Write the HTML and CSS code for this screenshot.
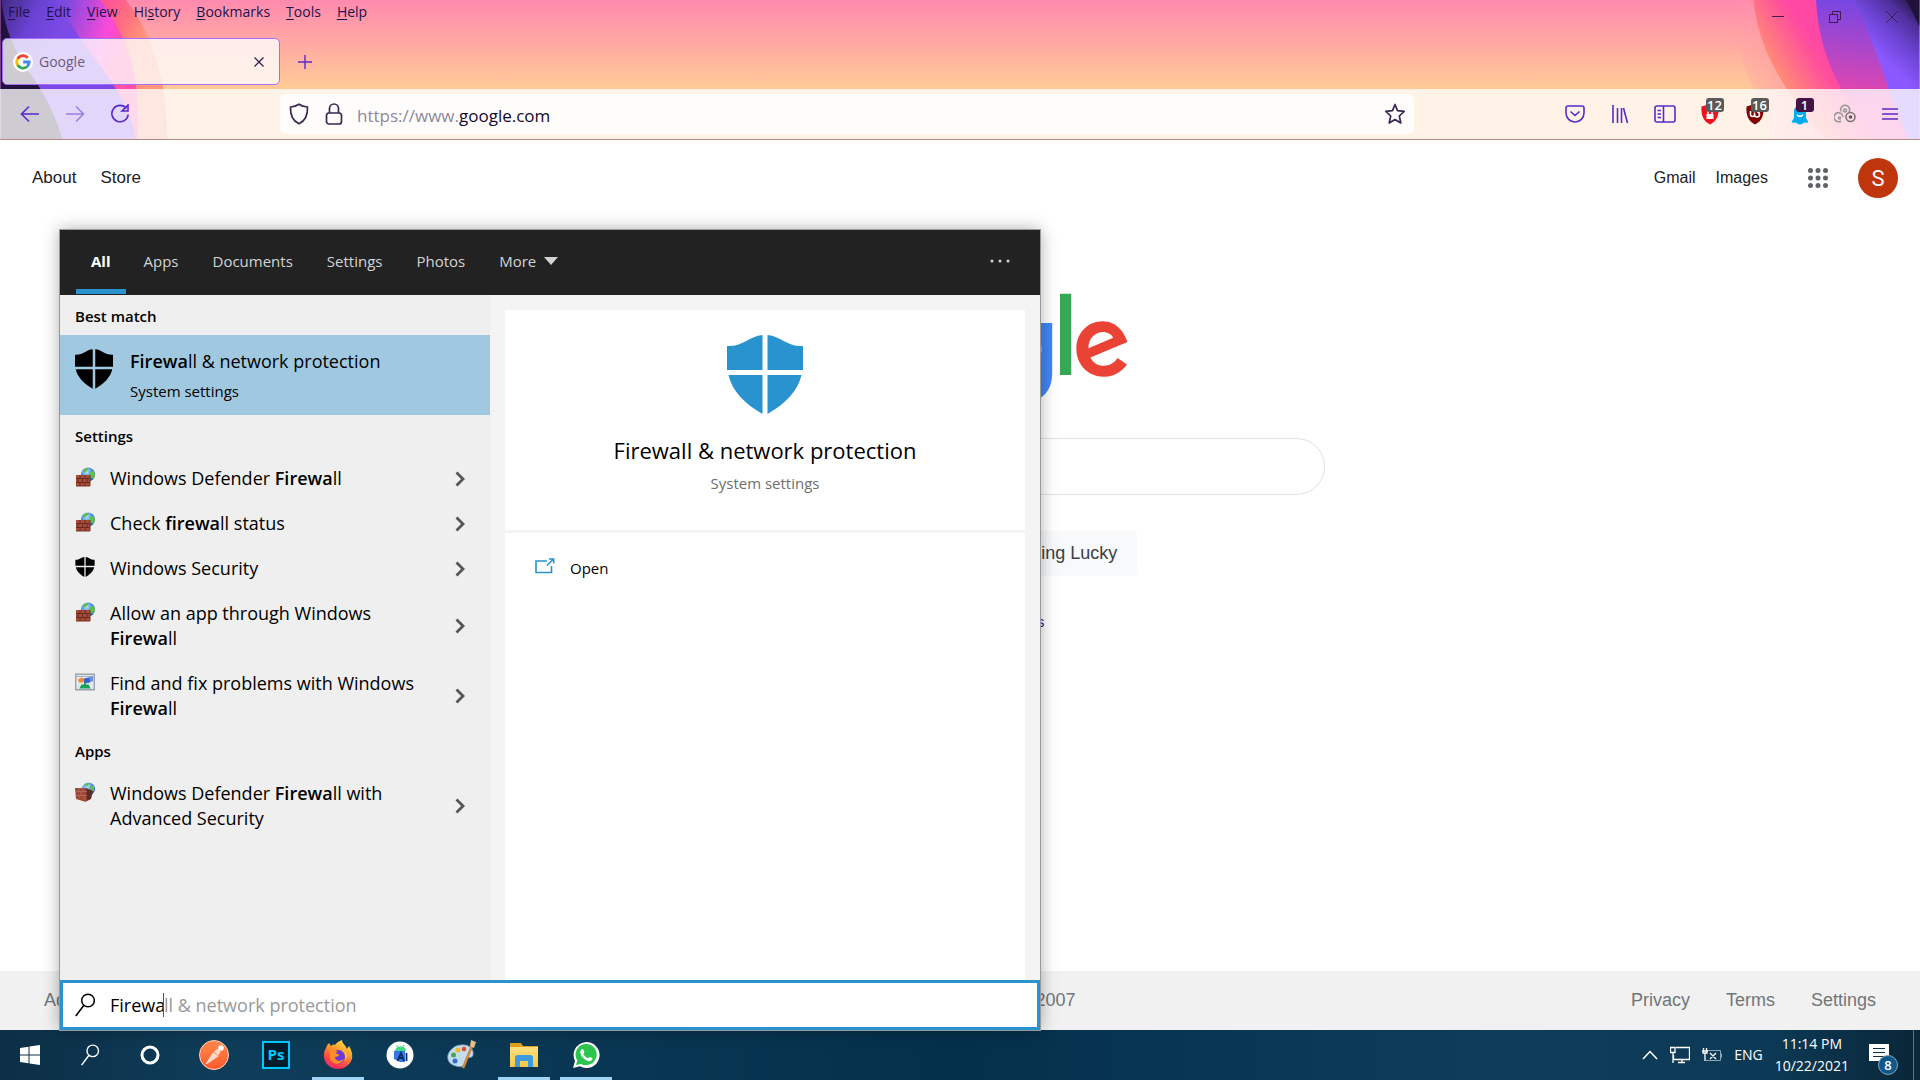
FILE: index.html
```html
<!DOCTYPE html>
<html lang="en">
<head>
<meta charset="utf-8">
<meta name="viewport" content="width=device-width, initial-scale=1">
<title>Desktop</title>
<link rel="stylesheet" href="styles.css">
</head>
<body>
<svg class="defs" aria-hidden="true">
  <defs>
    <linearGradient id="l-violet" gradientUnits="userSpaceOnUse" x1="0" y1="0" x2="60" y2="30"><stop offset="0" stop-color="#3f2a80"/><stop offset=".55" stop-color="#6a42d4"/><stop offset="1" stop-color="#7c4ae6"/></linearGradient>
    <linearGradient id="l-magenta" gradientUnits="userSpaceOnUse" x1="65" y1="0" x2="130" y2="20"><stop offset="0" stop-color="#7a48e0"/><stop offset=".75" stop-color="#ff4ad8"/><stop offset="1" stop-color="#ff4fa8"/></linearGradient>
    <linearGradient id="l-coral" gradientUnits="userSpaceOnUse" x1="105" y1="0" x2="150" y2="24"><stop offset="0" stop-color="#ff4f98"/><stop offset=".55" stop-color="#ff7080"/><stop offset="1" stop-color="#ff9478"/></linearGradient>
    <linearGradient id="r-coral" gradientUnits="userSpaceOnUse" x1="1765" y1="50" x2="1805" y2="25"><stop offset="0" stop-color="#ff8878"/><stop offset=".8" stop-color="#ff4f9c"/><stop offset="1" stop-color="#ff48a4"/></linearGradient>
    <linearGradient id="r-violet" gradientUnits="userSpaceOnUse" x1="1860" y1="0" x2="1845" y2="105"><stop offset="0" stop-color="#7446e6"/><stop offset="1" stop-color="#f046a8"/></linearGradient>
    <linearGradient id="r-blue" gradientUnits="userSpaceOnUse" x1="1876" y1="52" x2="1918" y2="8"><stop offset="0" stop-color="#8b58ff"/><stop offset=".4" stop-color="#6c44d4"/><stop offset=".75" stop-color="#4f309c"/><stop offset="1" stop-color="#2c1850"/></linearGradient>
    <linearGradient id="r-glow" x1="0" y1="0" x2="1" y2="0"><stop offset="0" stop-color="#ff9aa8" stop-opacity="0"/><stop offset="1" stop-color="#ff90a8"/></linearGradient>
    <radialGradient id="globe" cx=".4" cy=".3" r=".8"><stop offset="0" stop-color="#bfe4ff"/><stop offset=".5" stop-color="#3f8fe0"/><stop offset="1" stop-color="#1a4aa0"/></radialGradient>
    <linearGradient id="postman" x1="0" y1="0" x2="0" y2="1"><stop offset="0" stop-color="#ff8a4c"/><stop offset="1" stop-color="#ff5a2c"/></linearGradient>
    <linearGradient id="fox" x1=".8" y1="0" x2=".3" y2="1"><stop offset="0" stop-color="#fff04a"/><stop offset=".4" stop-color="#ff9a2a"/><stop offset=".8" stop-color="#ff3a4c"/><stop offset="1" stop-color="#f02a6a"/></linearGradient>
    <linearGradient id="folder" x1="0" y1="0" x2="0" y2="1"><stop offset="0" stop-color="#ffdf80"/><stop offset="1" stop-color="#fcc843"/></linearGradient>
    <symbol id="i-shield4" viewBox="0 0 76 79"><path d="M0 11C16 12 22 1 35.500 0V35H0ZM40.500 0C54 1 60 12 76 11V35H40.500ZM1.500 40H35.500V79C18 69 5 56 1.500 40ZM40.500 40H74.500C71 56 58 69 40.500 79Z"/></symbol>
    <symbol id="i-wall" viewBox="0 0 20 20"><circle cx="13" cy="7.500" r="7" fill="url(#globe)"/><path d="M8 3C10 1 12 1 14 1L12 4 9 6ZM15 5L19 4 20 8 18 12 15 10Z" fill="#5fbf4a"/><path d="M1 8H15V19H1Z" fill="#a84c38"/><path d="M1 11.500H15M1 15.500H15M5 8V11.500M10 8V11.500M3 11.500V15.500M7.500 11.500V15.500M12 11.500V15.500M5 15.500V19M10 15.500V19" stroke="#63281c" stroke-width=".9" fill="none"/><path d="M1 19H15V8" stroke="#7a3224" fill="none"/></symbol>
    <symbol id="i-wall3d" viewBox="0 0 20 20"><circle cx="13.500" cy="7" r="6.500" fill="url(#globe)"/><path d="M9 2L14 1 12 5ZM15 4L19 4 19 9 16 9Z" fill="#5fbf4a"/><path d="M0 6L11 6 13 17 11 20 1 17Z" fill="#9c4836"/><path d="M11 6L18 9 16 17 12 19Z" fill="#5e2c22"/><path d="M1 9.500H12M1 13.500H12M4 6V9.500M8 6V9.500M6 10V13.500M4 14V17M9 14V18" stroke="#c07a68" stroke-width=".6"/></symbol>
    <symbol id="i-fix" viewBox="0 0 20 17"><path d="M.7.7H19.300V16.300H.7Z" fill="#e4e8ec" stroke="#9aa4b0" stroke-width="1.400"/><path d="M1 3H19" stroke="#aab4c0"/><path d="M3 6L7 4 10 6 8 9 4 9Z" fill="#f08a30"/><path d="M9 5L14 4 17 6 15 9 9 10Z" fill="#3a5cd0"/><path d="M14 3H18V8L15 8Z" fill="#6d90e8"/><path d="M10 9V12M6 14H14L13 12H7Z" fill="#1ea05a" stroke="#1ea05a" stroke-width="2"/></symbol>
    <symbol id="i-chev" viewBox="0 0 10 16"><path d="M1.500 1.500L8 8 1.500 14.500" fill="none" stroke="currentColor" stroke-width="2.800"/></symbol>
    <symbol id="i-search" viewBox="0 0 20 24"><circle cx="13" cy="7.500" r="6.300" fill="none" stroke="currentColor" stroke-width="1.500"/><path d="M8.700 12.500L.8 23" stroke="currentColor" stroke-width="1.600"/></symbol>
  </defs>
</svg>

<main class="desktop">
  <section class="browser" aria-label="Browser">
    <header class="chrome">
      <svg class="theme theme-left" viewBox="0 0 180 140" aria-hidden="true">
        <path d="M0 0H126C148 26 168 75 168 140H0Z" fill="url(#l-coral)"/>
        <path d="M0 0H100C122 28 138 66 138 110V140H0Z" fill="url(#l-magenta)"/>
        <path d="M0 0H55C66 18 78 36 92 56C112 82 130 105 136 140H0Z" fill="url(#l-violet)"/>
        <path d="M0 0H1C4 34 18 58 34 80C46 98 56 118 62 140H0Z" fill="#20123a"/>
      </svg>
      <svg class="theme theme-right" viewBox="1720 0 200 140" aria-hidden="true">
        <path d="M1720 0H1760L1790 89L1830 140H1770Z" fill="url(#r-glow)"/>
        <path d="M1753 0C1757 40 1772 78 1826 140H1920V0Z" fill="url(#r-coral)"/>
        <path d="M1816 0C1818 40 1830 70 1846 98C1855 114 1870 130 1880 140H1920V0Z" fill="url(#r-violet)"/>
        <path d="M1855 0C1870 34 1880 62 1891 94L1909 140H1920V0Z" fill="url(#r-blue)"/>
        <path d="M1907 0L1920 26V0Z" fill="#20123a"/>
      </svg>

      <div class="titlebar">
        <nav class="menubar" aria-label="Menu bar">
          <button><u>F</u>ile</button><button><u>E</u>dit</button><button><u>V</u>iew</button><button>Hi<u>s</u>tory</button><button><u>B</u>ookmarks</button><button><u>T</u>ools</button><button><u>H</u>elp</button>
        </nav>
        <div class="winctl">
          <button aria-label="Minimize"><svg width="14" height="14"><path d="M1 6.500H13"/></svg></button>
          <button aria-label="Restore"><svg width="14" height="14"><path d="M1.500 4.500H9.500V12.500H1.500ZM4.500 4.500V1.500H12.500V9.500H9.500"/></svg></button>
          <button aria-label="Close"><svg width="14" height="14"><path d="M1 1L13 13M13 1L1 13"/></svg></button>
        </div>
      </div>

      <div class="tabstrip">
        <div class="tab">
          <svg class="favicon" viewBox="0 0 20 20" aria-hidden="true"><circle cx="10" cy="10" r="10" fill="#fff"/><g fill="none" stroke-width="2.800"><path d="M14.800 5.800A6.200 6.200 0 0 0 4.700 6.900" stroke="#ea4335"/><path d="M4.700 6.800A6.200 6.200 0 0 0 4.700 13.200" stroke="#fbbc05"/><path d="M4.600 13A6.200 6.200 0 0 0 14 14.700" stroke="#34a853"/><path d="M14 14.700A6.200 6.200 0 0 0 16.200 10H10.200" stroke="#4285f4"/></g></svg>
          <span class="tab-title">Google</span>
          <button class="tab-close" aria-label="Close tab"><svg width="12" height="12"><path d="M1.500 1.500L10.500 10.500M10.500 1.500L1.500 10.500"/></svg></button>
        </div>
        <button class="newtab" aria-label="New tab"><svg width="16" height="16"><path d="M8 1V15M1 8H15"/></svg></button>
      </div>

      <div class="toolbar">
        <div class="nav">
          <button aria-label="Back"><svg width="20" height="20"><path d="M19 10H2M9 2.500L1.500 10L9 17.500"/></svg></button>
          <button aria-label="Forward" class="off"><svg width="20" height="20"><path d="M1 10H18M11 2.500L18.500 10L11 17.500"/></svg></button>
          <button aria-label="Reload"><svg width="20" height="20"><path d="M16.500 4.500A8.200 8.200 0 1 0 18.200 10.500M12 7H18V1Z"/></svg></button>
        </div>
        <div class="urlbar">
          <svg width="20" height="22" viewBox="0 0 20 22"><path d="M10 1.200C12.500 3 15.500 3.800 18.500 4C18.800 11 17 17.500 10 20.800C3 17.500 1.200 11 1.500 4C4.500 3.800 7.500 3 10 1.200Z"/></svg>
          <svg width="20" height="22" viewBox="0 0 20 22"><rect x="2.500" y="10" width="15" height="11" rx="2.500"/><path d="M5.500 10V5.500A4.500 4.500 0 0 1 14.500 5.500V10"/></svg>
          <div class="url"><span>https://www.</span><input aria-label="Address" value="google.com"></div>
          <button aria-label="Bookmark this page"><svg width="22" height="22" viewBox="0 0 22 22"><path d="M11 1.500L13.500 7.600L20.200 8.300L15.300 13L16.800 20L11 16.600L5.200 20L6.700 13L1.800 8.300L8.500 7.600Z"/></svg></button>
        </div>
        <div class="tools">
          <button aria-label="Pocket"><svg width="20" height="18"><path d="M3 1H17A2 2 0 0 1 19 3V8A9 9 0 0 1 1 8V3A2 2 0 0 1 3 1ZM5.500 6.500L10 10.500L14.500 6.500"/></svg></button>
          <button aria-label="Library"><svg width="18" height="20"><path d="M2 1V19M6.500 4V19M10.500 4V19M12.500 4L16.500 19"/></svg></button>
          <button aria-label="Sidebar"><svg width="22" height="18"><path d="M3 1H19A2 2 0 0 1 21 3V15A2 2 0 0 1 19 17H3A2 2 0 0 1 1 15V3A2 2 0 0 1 3 1ZM9.500 1V17M3.500 5.500H7M3.500 9H7M3.500 12.500H7"/></svg></button>
          <button aria-label="Privacy shield"><svg width="20" height="22" viewBox="0 0 20 22"><path d="M10 1L18.500 3.500C19 12 17 18 10 21.500C3 18 1 12 1.500 3.500Z" fill="#f2121c" stroke="none"/><path d="M6.500 11H13.500V16H6.500Z" fill="#fff" stroke="none"/><path d="M8 11V9A2 2 0 0 1 12 9V11" stroke="#fff"/></svg><span class="badge">12</span></button>
          <button aria-label="Content blocker"><svg width="20" height="22" viewBox="0 0 20 22"><path d="M10 1L18.500 3.500C19 12 17 18 10 21.500C3 18 1 12 1.500 3.500Z" fill="#800000" stroke="none"/><path d="M5.500 8V11.500A2 2 0 0 0 9.500 11.500V9.500M9.500 11.500A2.500 2.500 0 1 0 12 9" stroke="#fff"/></svg><span class="badge">16</span></button>
          <button aria-label="Ghostery"><svg width="20" height="22" viewBox="0 0 20 22"><path d="M4 8C4 1 16 1 16 8V15L18.500 19C16 21 14 18.500 12.500 20.500C11 22 9 22 7.500 20.500C6 18.500 4 21 1.500 19L4 15Z" fill="#00aef0" stroke="none"/><path d="M7 11.500C8 14 12 14 13 11.500" stroke="#fff"/></svg><span class="badge dark">1</span></button>
          <button aria-label="Extension"><svg width="22" height="20" viewBox="0 0 22 20"><g stroke="#999" stroke-width="1.600"><path d="M7 17A4.500 4.500 0 1 1 9 13M7 7.500A4.500 4.500 0 1 1 15 8"/><circle cx="5.500" cy="14" r="1"/><circle cx="11" cy="6.500" r="1.500"/><circle cx="16.500" cy="13" r="4.500" stroke="#777"/><circle cx="16.500" cy="13" r="1" stroke="#555"/></g></svg></button>
          <button aria-label="Application menu"><svg width="16" height="14"><path d="M0 2H16M0 7H16M0 12H16"/></svg></button>
        </div>
      </div>
    </header>

    <div class="page">
      <header class="g-top">
        <div class="g-links"><a href="#">About</a><a href="#">Store</a></div>
        <span class="grow"></span>
        <a href="#">Gmail</a><a href="#">Images</a>
        <button class="apps" aria-label="Google apps"><svg width="20" height="20" fill="#5f6368"><g id="dots"><circle cx="2.500" cy="2.500" r="2.500"/><circle cx="10" cy="2.500" r="2.500"/><circle cx="17.500" cy="2.500" r="2.500"/></g><use href="#dots" y="7.500"/><use href="#dots" y="15"/></svg></button>
        <button class="avatar">S</button>
      </header>
      <div class="g-center">
        <svg class="g-logo" viewBox="0 0 272 92" role="img" aria-label="Google">
          <ellipse cx="93.500" cy="47.200" rx="17.400" ry="17.800" fill="none" stroke="#ea4335" stroke-width="9.200"/>
          <ellipse cx="141.500" cy="47.200" rx="17.400" ry="17.800" fill="none" stroke="#fbbc05" stroke-width="9.200"/>
          <path d="M58 13.500A31 30 0 1 0 63 36.700H35.300" fill="none" stroke="#4285f4" stroke-width="9.500"/>
          <path fill="#4285f4" d="M209.750 26.340v39.820c0 16.380-9.660 23.070-21.080 23.070-10.750 0-17.220-7.190-19.660-13.070l8.480-3.530c1.510 3.610 5.210 7.870 11.170 7.870 7.310 0 11.840-4.510 11.840-13v-3.190h-.34c-2.180 2.690-6.380 5.040-11.680 5.040-11.090 0-21.250-9.660-21.250-22.090 0-12.520 10.160-22.260 21.250-22.260 5.290 0 9.490 2.350 11.680 4.960h.34v-3.610h9.250zm-8.560 20.920c0-7.810-5.210-13.520-11.840-13.520-6.720 0-12.350 5.710-12.350 13.520 0 7.730 5.630 13.360 12.350 13.360 6.630 0 11.840-5.630 11.840-13.360z"/>
          <rect x="216" y="3" width="9" height="65" fill="#34a853"/>
          <path fill="#ea4335" d="M262.020 54.480l7.560 5.040c-2.440 3.610-8.320 9.830-18.480 9.830-12.600 0-22.010-9.740-22.010-22.180 0-13.190 9.490-22.180 20.920-22.180 11.510 0 17.140 9.160 18.980 14.110l1.010 2.520-29.650 12.280c2.270 4.450 5.800 6.720 10.750 6.720 4.960 0 8.400-2.440 10.920-6.140zm-23.270-7.980l19.820-8.230c-1.090-2.770-4.370-4.700-8.230-4.700-4.950 0-11.840 4.370-11.590 12.930z"/>
        </svg>
        <input class="g-search" type="text" aria-label="Search Google">
        <div class="g-buttons"><button>Google Search</button><button>I'm Feeling Lucky</button></div>
        <p class="g-lang">Google offered in: <a href="#">Français</a></p>
      </div>
      <footer class="g-foot">
        <div><a href="#">Advertising</a></div>
        <a class="carbon" href="#"><svg width="14" height="18"><path d="M7 17V9M7 12C1 12 1 6 2 1C9 2 13 6 11 12Z" fill="#34a853" stroke="#34a853"/></svg>Carbon neutral since 2007</a>
        <div class="end"><a href="#">Privacy</a><a href="#">Terms</a><a href="#">Settings</a></div>
      </footer>
    </div>
  </section>

  <section class="start" aria-label="Windows search">
    <nav class="scopes">
      <button class="on">All</button><button>Apps</button><button>Documents</button><button>Settings</button><button>Photos</button><button class="more">More <svg width="14" height="8"><path d="M0 0H14L7 8Z" fill="currentColor"/></svg></button>
      <span class="grow"></span>
      <button class="dots" aria-label="Options"><svg width="20" height="4" fill="currentColor"><circle cx="2" cy="2" r="1.500"/><circle cx="10" cy="2" r="1.500"/><circle cx="18" cy="2" r="1.500"/></svg></button>
    </nav>
    <div class="body">
      <div class="results">
        <h2>Best match</h2>
        <button class="best"><svg width="38" height="40"><use href="#i-shield4"/></svg><span><span class="title"><b>Firewa</b>ll &amp; network protection</span><span class="sub">System settings</span></span></button>
        <h2>Settings</h2>
        <button class="item"><svg class="ico"><use href="#i-wall"/></svg><span>Windows Defender <b>Firewa</b>ll</span><svg class="chev"><use href="#i-chev"/></svg></button>
        <button class="item"><svg class="ico"><use href="#i-wall"/></svg><span>Check <b>firewa</b>ll status</span><svg class="chev"><use href="#i-chev"/></svg></button>
        <button class="item"><svg class="ico"><use href="#i-shield4"/></svg><span>Windows Security</span><svg class="chev"><use href="#i-chev"/></svg></button>
        <button class="item"><svg class="ico"><use href="#i-wall"/></svg><span>Allow an app through Windows <b>Firewa</b>ll</span><svg class="chev"><use href="#i-chev"/></svg></button>
        <button class="item"><svg class="ico"><use href="#i-fix"/></svg><span>Find and fix problems with Windows <b>Firewa</b>ll</span><svg class="chev"><use href="#i-chev"/></svg></button>
        <h2>Apps</h2>
        <button class="item"><svg class="ico"><use href="#i-wall3d"/></svg><span>Windows Defender <b>Firewa</b>ll with Advanced Security</span><svg class="chev"><use href="#i-chev"/></svg></button>
      </div>
      <div class="detail">
        <div class="card hero">
          <svg width="76" height="79"><use href="#i-shield4"/></svg>
          <h1>Firewall &amp; network protection</h1>
          <p>System settings</p>
        </div>
        <div class="card actions">
          <button><svg width="20" height="20" viewBox="0 0 20 20"><path d="M12 3H1V14.500H16.500V8M12 7.500L18 1.500M14 1H18.700V5.500" fill="none" stroke="#2893ce" stroke-width="1.600"/></svg>Open</button>
        </div>
      </div>
    </div>
    <label class="query">
      <svg width="20" height="24"><use href="#i-search"/></svg>
      <span class="typed"><input aria-label="Search" value="Firewa"><span>ll &amp; network protection</span></span>
    </label>
  </section>

  <footer class="taskbar">
    <div class="pinned">
      <div class="sys">
        <button aria-label="Start"><svg width="20" height="20" fill="#fff"><path d="M0 3L8.500 1.800V9.500H0ZM9.500 1.600L20 0V9.500H9.500ZM0 10.500H8.500V18.200L0 17ZM9.500 10.500H20V20L9.500 18.400Z"/></svg></button>
        <button aria-label="Search"><svg width="20" height="22"><use href="#i-search"/></svg></button>
        <button aria-label="Cortana"><svg width="20" height="20"><circle cx="10" cy="10" r="8" fill="none" stroke="#fff" stroke-width="3"/></svg></button>
      </div>
      <button aria-label="Postman"><svg width="30" height="30"><circle cx="15" cy="15" r="14.500" fill="url(#postman)" stroke="#ffd8c8"/><path d="M7 24L14 13L19 16L9 23ZM15 12L19 9L21 12L19 15" fill="#ffd9c8" stroke="#fff" stroke-width=".6"/><circle cx="22" cy="8" r="2.800" fill="#fff"/></svg></button>
      <button aria-label="Photoshop"><span class="ps">Ps</span></button>
      <button class="run" aria-label="Firefox"><svg width="30" height="30" viewBox="0 0 30 30"><path d="M3 8C4 5 5 4 6 3L8 6C9 5 11 4 12 5C14 2 17 1 19 0C19 4 23 5 24 9L26 6C31 14 30 21 25 25C19 31 9 30 4 24C0 19 0 13 3 8Z" fill="url(#fox)"/><circle cx="15" cy="17" r="7" fill="#6a3ae0"/><path d="M7 11C10 9 13 10 15 12C12 12 13 14 15 14C18 15 14 17 12 17C12 21 17 22 21 19C19 25 10 26 7 19Z" fill="#ff8a28"/><path d="M19 10C23 12 24 17 21 21C25 18 25 12 19 10Z" fill="#ffdd44"/></svg></button>
      <button aria-label="Android Studio"><svg width="28" height="28"><circle cx="14" cy="14" r="13.500" fill="#fff"/><path d="M9 10A5.500 4.500 0 0 1 20 10Z" fill="#3ddc84"/><path d="M8 10H19V21H14L8 18Z" fill="#3578e5"/><path d="M11.500 20L15 12L18 20M12.500 17H17M20.500 12V20" stroke="#0a2a66" stroke-width="1.800" fill="none"/><path d="M10.500 4L12 7M18 4L16.500 7" stroke="#3ddc84"/></svg></button>
      <button aria-label="Paint"><svg width="30" height="30"><path d="M14 5C22 4 27 9 26 15C25 19 20 16 19 20C19 25 15 28 9 26C0 24-1 16 3 11C6 7 10 5 14 5Z" fill="#c3dcee" stroke="#7ba3c0" stroke-width=".8"/><circle cx="6.500" cy="15" r="2.500" fill="#4aa84a"/><circle cx="11" cy="10" r="2.500" fill="#f0b82c"/><circle cx="17" cy="9" r="2.300" fill="#e24a3a"/><circle cx="8" cy="21" r="2.500" fill="#2f72d0"/><path d="M25 6L16 28" stroke="#d08840" stroke-width="2.600"/><path d="M23 6L24 0L29 2L27 8Z" fill="#e8c08a"/></svg></button>
      <button class="run" aria-label="File Explorer"><svg width="28" height="28"><path d="M0 2H11L13 5H28V25H0Z" fill="#e0a01c"/><path d="M0 6H28V26H0Z" fill="url(#folder)"/><path d="M5 26V17A3 3 0 0 1 8 14H20A3 3 0 0 1 23 17V26H18V20H10V26Z" fill="#3d9be0"/></svg></button>
      <button class="run" aria-label="WhatsApp"><svg width="28" height="28" viewBox="0 0 28 28"><path d="M1 27L3 20A13 13 0 1 1 8 25.300Z" fill="#fff"/><path d="M4 24L5.300 19.500A10.600 10.600 0 1 1 9 22.900Z" fill="#2cc64e"/><path d="M9 9C10 7.500 11 8 11.500 9L12.300 11C12.600 12 11 12.500 11.400 13.200C12.600 15.200 14 16.400 16 17.200C17 17.300 17.200 15.600 18.200 16L20.300 17C21 17.600 20 20 17.500 20.200C13 20 8 14.500 8.300 11C8.400 10.200 8.600 9.500 9 9Z" fill="#fff"/></svg></button>
    </div>
    <div class="tray">
      <button aria-label="Show hidden icons"><svg width="16" height="10"><path d="M1 9L8 1.500L15 9" fill="none" stroke="#fff" stroke-width="1.500"/></svg></button>
      <button aria-label="Network"><svg width="20" height="18"><path d="M6 1.500H19.500V13.500H3.500V9M3 17V7M.5 1.500H5V6.500H.5ZM12 14V16.500M8 16.500H15" fill="none" stroke="#fff" stroke-width="1.300"/></svg></button>
      <button aria-label="Battery"><svg width="20" height="14"><path d="M5 2.500H18.500V12.500H4M19.500 5.500V9.500" fill="none" stroke="#8ea6b4"/><path d="M1.500 0V3M4.500 0V3M0 3H6M1 3V5H5V3M3 5V13M8 5L14 11M14 5L8 11" fill="none" stroke="#fff" stroke-width="1.300"/></svg></button>
      <button class="lang">ENG</button>
      <button class="clock"><span>11:14 PM</span><span>10/22/2021</span></button>
      <button class="notes" aria-label="Notifications"><svg width="20" height="22"><path d="M0 0H20V17H14L10 21V17H0Z" fill="#fff"/><path d="M4 4.500H16M4 8.500H16M4 12.500H16" stroke="#0c2f46" stroke-width="1.200"/></svg><span class="count">8</span></button>
    </div>
  </footer>
</main>
</body>
</html>
```
FILE: styles.css
```css
:root {
  --ui: "Segoe UI", "Open Sans", "Noto Sans", sans-serif;
  --web: Arial, "Liberation Sans", sans-serif;
  --blue: #2893ce;
  --violet: #592acb;
}

* { box-sizing: border-box; }

body {
  margin: 0;
  font-family: var(--ui);
  font-size: 14px;
  line-height: 20px;
}

button {
  margin: 0;
  padding: 0;
  border: 0;
  background: none;
  color: inherit;
  font: inherit;
  text-align: left;
}

input { font: inherit; color: inherit; outline: 0; }
h1, h2, p { margin: 0; }
b { font-weight: 600; }
svg { display: block; flex: none; }
.defs { position: absolute; width: 0; height: 0; }
.grow { flex: 1; }

.desktop {
  position: relative;
  display: flex;
  flex-direction: column;
  height: 100vh;
  min-height: 900px;
  overflow: hidden;
}

.browser { flex: 1; display: flex; flex-direction: column; min-height: 0; }

/* Browser chrome */
.chrome {
  position: relative;
  z-index: 0;
  background: linear-gradient(#ff8ab0, #ffca96 88px);
  border-bottom: 1px solid #b58a80;
}

.theme { position: absolute; top: 0; height: 139px; z-index: -1; }
.theme-left { left: 0; width: 180px; }
.theme-right { right: 0; width: 200px; }

.titlebar { display: flex; justify-content: space-between; height: 32px; color: #22124a; }
.menubar { display: flex; align-items: flex-start; gap: 16px; padding: 2px 8px; }
.menubar u { text-underline-offset: 2px; }
.winctl { display: flex; gap: 43px; padding: 10px 21px; }
.winctl svg { fill: none; stroke: #421c50; }

.tabstrip { display: flex; align-items: center; height: 57px; padding: 2px 2px 0; gap: 17px; }
.tab {
  display: flex;
  align-items: center;
  width: 278px;
  height: 47px;
  padding: 1px 14px 0 10px;
  gap: 6px;
  border: 1px solid #a56dfa;
  border-radius: 5px;
  background: rgba(255, 255, 255, .78);
  color: #6a5a7c;
}
.favicon { width: 20px; height: 20px; }
.tab-title { flex: 1; }
.tab-close svg { stroke: #2b1a4a; stroke-width: 1.2; }
.newtab svg { stroke: var(--violet); stroke-width: 1.4; }

.toolbar {
  display: flex;
  align-items: center;
  height: 50px;
  padding: 0 22px 0 20px;
  background: rgba(255, 255, 255, .78);
}
.nav { display: flex; gap: 25px; width: 260px; }
.nav svg, .tools svg { fill: none; stroke: var(--violet); stroke-width: 1.6; }
.nav .off { opacity: .5; }
.urlbar {
  display: flex;
  align-items: center;
  flex: 1;
  height: 40px;
  padding: 0 8px 0 9px;
  gap: 15px;
  border-radius: 5px;
  background: rgba(255, 255, 255, .8);
}
.urlbar svg { fill: none; stroke: #3a2850; stroke-width: 1.7; stroke-linejoin: round; }
.url { display: flex; flex: 1; padding-top: 3px; font-size: 17px; line-height: 24px; margin-left: -2px; color: #8f86a0; }
.url input { flex: 1; padding: 0; border: 0; background: none; color: #15082e; }
.tools { display: grid; grid-template-columns: repeat(8, 45px); justify-items: center; align-items: center; margin-left: 138px; margin-right: -14px; }
.tools button { position: relative; }
.badge {
  position: absolute;
  left: 6px;
  top: -5px;
  min-width: 18px;
  height: 14px;
  border-radius: 3px;
  background: #5a5a5a;
  color: #fff;
  font-size: 13px;
  font-weight: 600;
  line-height: 14px;
  text-align: center;
}
.badge.dark { background: #441544; }

/* Google page */
.page { flex: 1; display: flex; flex-direction: column; min-height: 0; background: #fff; font-family: var(--web); color: #202124; }
.page a { color: inherit; text-decoration: none; }
.g-top { display: flex; align-items: center; height: 76px; padding: 0 22px 0 32px; gap: 20px; font-size: 16px; }
.g-links { display: flex; gap: 24px; font-size: 17px; }
.g-top .apps { margin: 0 10px 0 20px; }
.avatar { width: 40px; height: 40px; border-radius: 50%; background: #c0360c; color: #fff; font: 22px Roboto, sans-serif; text-align: center; }
.g-center { flex: 1; display: flex; flex-direction: column; align-items: center; padding-top: 74px; }
.g-logo { width: 340px; height: 115px; }
.g-search { width: 730px; height: 57px; margin-top: 33px; padding: 0 24px; border: 1px solid #dfe1e5; border-radius: 29px; }
.g-buttons { display: flex; gap: 15px; margin-top: 36px; }
.g-buttons button { height: 45px; padding: 0 20px 2px; border-radius: 5px; background: #f8f9fa; color: #3c4043; font-size: 18px; }
.g-lang { margin-top: 36px; font-size: 14px; color: #4d5156; }
.page .g-lang a { color: #1a0dab; }
.g-foot {
  display: grid;
  grid-template-columns: 1fr auto 1fr;
  align-items: center;
  height: 59px;
  padding: 0 44px 2px;
  background: #f1f1f1;
  color: #70757a;
  font-size: 18px;
}
.g-foot div { display: flex; gap: 36px; }
.g-foot .end { justify-content: flex-end; }
.carbon { display: flex; align-items: center; gap: 6px; }

/* Windows search panel */
.start {
  position: absolute;
  left: 60px;
  top: 230px;
  bottom: 50px;
  width: 980px;
  display: flex;
  flex-direction: column;
  background: #f4f4f4;
  color: #000;
  font-size: 15px;
  box-shadow: 0 0 0 1px #999, 0 0 16px rgba(0, 0, 0, .35);
}
.scopes { display: flex; height: 65px; padding: 0 26px 0 16px; background: #222; color: #d4d4d4; }
.scopes button { margin-right: 2px; padding: 0 16px 4px; }
.scopes .on { padding: 0 15px 3px; border-bottom: 5px solid var(--blue); border-top: 5px solid transparent; margin-bottom: 1px; color: #fff; font-weight: 700; }
.scopes .more { display: flex; align-items: center; gap: 8px; }
.scopes .dots { margin: 0; padding: 0 4px 4px; }

.body { flex: 1; display: flex; min-height: 0; }
.results { width: 430px; background: #efefef; }
.results h2 { height: 40px; padding: 0 15px; font-size: 15px; font-weight: 600; line-height: 42px; }
.best { display: flex; gap: 17px; width: 100%; height: 80px; padding: 14px 15px; background: #a0c9e1; }
.title, .sub { display: block; }
.title { font-size: 18px; line-height: 25px; }
.sub { margin-top: 7px; }
.item { display: flex; align-items: center; width: 100%; padding: 11px 25px 9px 15px; font-size: 18px; line-height: 25px; }
.item span { flex: 1; margin: 0 35px 0 15px; }
.ico { width: 20px; height: 20px; align-self: flex-start; margin-top: 1px; }
.chev { width: 10px; height: 16px; color: #555; }

.detail { flex: 1; display: flex; flex-direction: column; gap: 3px; padding: 15px 15px 0; }
.card { background: #fff; }
.hero { display: flex; flex-direction: column; align-items: center; height: 220px; padding-top: 25px; }
.hero svg { fill: var(--blue); }
.hero h1 { margin-top: 19px; font-size: 22px; font-weight: 400; line-height: 34px; }
.hero p { margin-top: 6px; color: #6e6e6e; }
.actions { flex: 1; padding: 25px 30px; }
.actions button { display: flex; align-items: center; gap: 15px; }

.query {
  display: flex;
  align-items: center;
  gap: 15px;
  height: 50px;
  padding: 0 12px;
  border: 3px solid var(--blue);
  background: #fff;
  font-size: 18px;
  line-height: 24px;
}
.typed { display: flex; color: #999; }
.typed input { width: 54px; padding: 0; border: 0; border-right: 1px solid #555; background: none; color: #000; }

/* Taskbar */
.taskbar {
  display: flex;
  justify-content: space-between;
  height: 50px;
  background: linear-gradient(90deg, #0c2f46, #0e3d5a 12%, #0c3a56 20%, #04304c 50%, #0e3d5a 78%, #0c3a56 92%, #0a2638);
  color: #fff;
}
.pinned, .tray { display: flex; align-items: stretch; }
.pinned button { display: flex; align-items: center; justify-content: center; width: 52px; margin: 0 5px; }
.sys { display: flex; margin-right: 3px; }
.pinned .sys button { width: 60px; margin: 0; }
.pinned .run { border-bottom: 3px solid #9fd4f7; border-top: 3px solid transparent; }
.ps { width: 28px; height: 28px; border: 2px solid #00c8ff; background: #001d2c; color: #00c8ff; font: 700 15px/22px "Open Sans", sans-serif; text-align: center; }
.tray { gap: 12px; padding-right: 5px; border-right: 1px solid transparent; }
.tray button { display: flex; align-items: center; justify-content: center; }
.clock { flex-direction: column; line-height: 22px; }
.tray .notes { position: relative; padding: 0 24px 0 8px; border-right: 1px solid #5b7484; }
.count {
  position: absolute;
  left: 17px;
  top: 25px;
  width: 20px;
  height: 20px;
  border: 1px solid #7fa6bf;
  border-radius: 50%;
  background: #10578a;
  font-size: 13px;
  font-weight: 600;
  line-height: 18px;
  text-align: center;
}
```
